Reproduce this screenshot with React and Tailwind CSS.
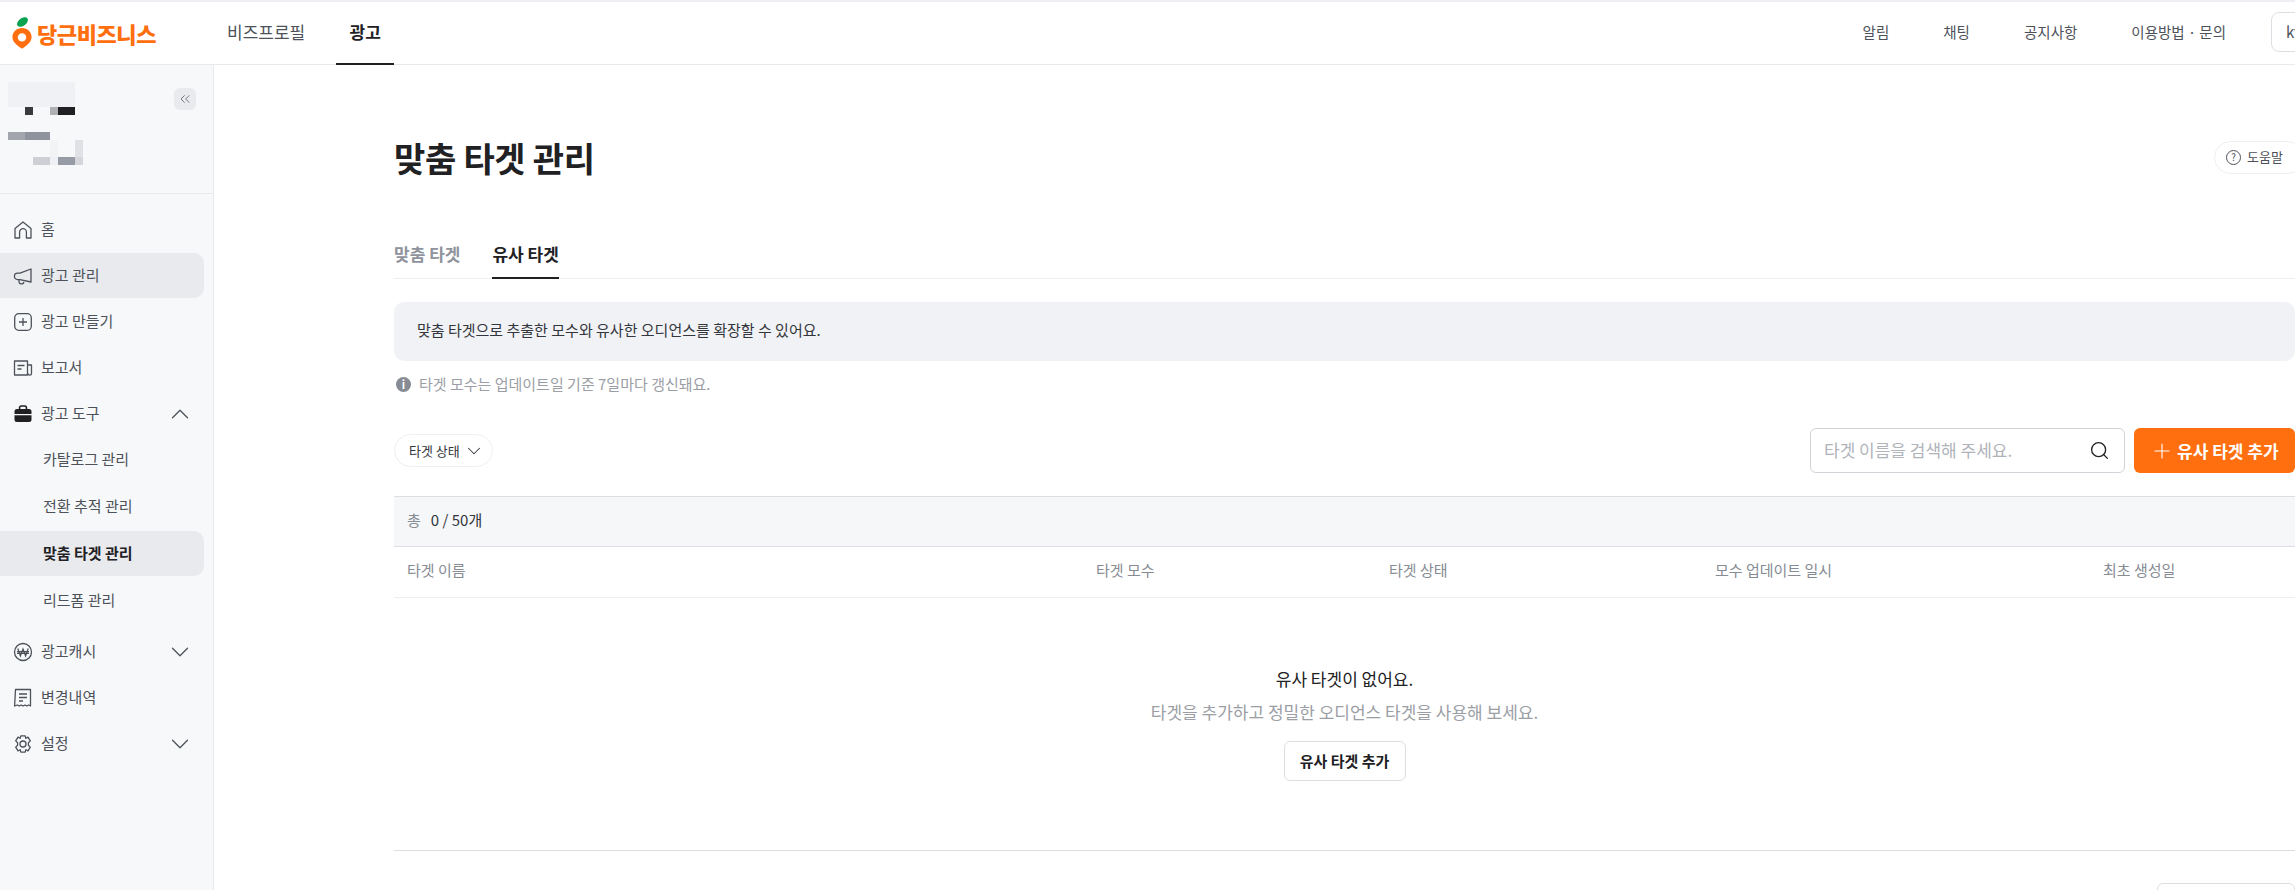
import { ChevronDown, ChevronUp, ChevronsLeft, Plus, Search } from 'lucide-react'

const font = { fontFamily: '"Noto Sans CJK KR", "Noto Sans", sans-serif' }

function Logo() {
  return (
    <svg width="20" height="32" viewBox="0 0 20 32">
      <ellipse cx="10.5" cy="5" rx="6.2" ry="3.8" transform="rotate(-38 10.5 5)" fill="#0aa34f" />
      <path d="M10 11c5.6 0 9.6 4 9.6 9 0 5-4.6 8.2-8 10.8-1 .8-2.2.8-3.2 0C5 28.2.4 25 .4 20c0-5 4-9 9.6-9z" fill="#ff6f0f" />
      <circle cx="10" cy="20.4" r="4.2" fill="#fff" />
    </svg>
  )
}

function HomeIcon() {
  return (
    <svg width="20" height="20" viewBox="0 0 20 20" fill="none" stroke="#4d5159" strokeWidth="1.3" strokeLinejoin="round">
      <path d="M2 8.4 10 2l8 6.4V18h-4.6v-6a3.4 3.4 0 0 0-6.8 0v6H2z" />
    </svg>
  )
}

function MegaphoneIcon() {
  return (
    <svg width="20" height="20" viewBox="0 0 20 20" fill="none" stroke="#4d5159" strokeWidth="1.3" strokeLinejoin="round">
      <path d="M18 3v13L7 13.6H4.6a3.2 3.2 0 0 1 0-6.4H7z" />
      <path d="M6 13.6v1.6a2.4 2.4 0 0 0 4.8.6" />
    </svg>
  )
}

function PlusBoxIcon() {
  return (
    <svg width="20" height="20" viewBox="0 0 20 20" fill="none" stroke="#4d5159" strokeWidth="1.3">
      <rect x="1.700" y="1.700" width="16.600" height="16.600" rx="4" />
      <path d="M10 6v8M6 10h8" />
    </svg>
  )
}

function ReportIcon() {
  return (
    <svg width="20" height="20" viewBox="0 0 20 20" fill="none" stroke="#4d5159" strokeWidth="1.3" strokeLinejoin="round">
      <path d="M1.500 3h13v14h-13z" />
      <path d="M14.500 7h4v8.400a1.700 1.700 0 0 1-3.400 0" />
      <path d="M4.500 7.500h7M4.500 11h4" />
    </svg>
  )
}

function BriefcaseIcon() {
  return (
    <svg width="20" height="20" viewBox="0 0 20 20">
      <path d="M6.600 5V3.600c0-.9.7-1.600 1.600-1.600h3.600c.9 0 1.600.7 1.600 1.600V5" fill="none" stroke="#212124" strokeWidth="1.600" />
      <path d="M4 5h12a2.500 2.500 0 0 1 2.500 2.500V10h-17V7.500A2.500 2.500 0 0 1 4 5z" fill="#212124" />
      <path d="M1.500 11.200h17V15.500A2.500 2.500 0 0 1 16 18H4a2.500 2.500 0 0 1-2.500-2.500z" fill="#212124" />
    </svg>
  )
}

function WonIcon() {
  return (
    <svg width="20" height="20" viewBox="0 0 20 20" fill="none" stroke="#4d5159" strokeWidth="1.300">
      <circle cx="10" cy="10" r="8.500" />
      <path d="m4.800 6.500 2.600 7.500L10 7l2.600 7 2.600-7.500M4 9.600h12M4 11.400h12" strokeWidth="1.200" />
    </svg>
  )
}

function ReceiptIcon() {
  return (
    <svg width="20" height="20" viewBox="0 0 20 20" fill="none" stroke="#4d5159" strokeWidth="1.300" strokeLinejoin="round">
      <path d="M2.500 1.500h15v16.500l-2-1-1.700 1-1.900-1-1.900 1-1.900-1-1.900 1-1.700-1-2.900 1z" />
      <path d="M6 6h8M6 9.500h8M6 13h4" />
    </svg>
  )
}

function GearIcon() {
  return (
    <svg width="20" height="20" viewBox="0 0 20 20" fill="none" stroke="#4d5159" strokeWidth="1.300" strokeLinejoin="round">
      <path d="M7.800 1.800h4.400l.6 2.500 2.200-1.200 2.300 3.800-1.900 1.800v2.600l1.900 1.800-2.300 3.800-2.200-1.200-.6 2.500H7.800l-.6-2.500L5 16.900l-2.300-3.800 1.900-1.800V8.700L2.700 6.900 5 3.100l2.200 1.200z" />
      <circle cx="10" cy="10" r="3" />
    </svg>
  )
}

function Mosaic() {
  return (
    <svg width="83" height="83" viewBox="8 82 83 83" shapeRendering="crispEdges">
      <rect x="8" y="82" width="67" height="25" fill="#f0f1f4" />
      <rect x="25" y="107" width="8" height="8" fill="#3a3a3c" />
      <rect x="50" y="107" width="8" height="8" fill="#b0b0b2" />
      <rect x="58" y="107" width="17" height="8" fill="#202022" />
      <rect x="8" y="132" width="17" height="8" fill="#a2a5ae" />
      <rect x="25" y="132" width="25" height="8" fill="#8f939d" />
      <rect x="50" y="140" width="8" height="17" fill="#f2f3f5" />
      <rect x="75" y="140" width="8" height="17" fill="#e0e1e5" />
      <rect x="33" y="157" width="17" height="8" fill="#cdcfd5" />
      <rect x="50" y="157" width="8" height="8" fill="#eff0f3" />
      <rect x="58" y="157" width="17" height="8" fill="#979ba5" />
      <rect x="75" y="157" width="8" height="8" fill="#d5d6db" />
    </svg>
  )
}

function NavItem({ icon, label, active, chevron }) {
  return (
    <div className={`h-[45px] mr-[9px] flex items-center pl-[13px] pr-[9px] rounded-r-[10px] text-[15px] text-[#4d5159] ${active ? 'bg-[#e9eaee]' : ''}`}>
      <span className="w-[20px] h-[20px] mr-[8px]">{icon}</span>
      <span className="flex-1">{label}</span>
      {chevron === 'up' && <ChevronUp size={30} strokeWidth={1} color="#4d5159" />}
      {chevron === 'down' && <ChevronDown size={30} strokeWidth={1} color="#4d5159" />}
    </div>
  )
}

function SubItem({ label, active }) {
  return (
    <div className={`h-[45px] mr-[9px] flex items-center pl-[43px] rounded-r-[10px] text-[15px] ${active ? 'bg-[#e9eaee] font-bold text-[#212124]' : 'text-[#4d5159]'}`}>
      {label}
    </div>
  )
}

function Sidebar() {
  return (
    <aside className="w-[214px] shrink-0 bg-[#f7f8fa] border-r border-[#e9eaee]">
      <div className="h-[129px] border-b border-[#e9eaee] pl-[8px] pt-[17px] flex items-start">
        <Mosaic />
        <div className="ml-[83px] mt-[6px] w-[22px] h-[22px] rounded-[6px] bg-[#e9eaee] flex items-center justify-center">
          <ChevronsLeft size={16} strokeWidth={1.1} color="#4d5159" />
        </div>
      </div>
      <nav className="pt-[13px] flex flex-col">
        <div className="flex flex-col gap-px">
          <NavItem icon={<HomeIcon />} label="홈" />
          <NavItem icon={<MegaphoneIcon />} label="광고 관리" active />
          <NavItem icon={<PlusBoxIcon />} label="광고 만들기" />
          <NavItem icon={<ReportIcon />} label="보고서" />
          <NavItem icon={<BriefcaseIcon />} label="광고 도구" chevron="up" />
        </div>
        <div className="flex flex-col gap-[2px] mt-px mb-[6px]">
          <SubItem label="카탈로그 관리" />
          <SubItem label="전환 추적 관리" />
          <SubItem label="맞춤 타겟 관리" active />
          <SubItem label="리드폼 관리" />
        </div>
        <div className="flex flex-col gap-px">
          <NavItem icon={<WonIcon />} label="광고캐시" chevron="down" />
          <NavItem icon={<ReceiptIcon />} label="변경내역" />
          <NavItem icon={<GearIcon />} label="설정" chevron="down" />
        </div>
      </nav>
    </aside>
  )
}

function Header() {
  return (
    <header className="h-[65px] shrink-0 border-t-2 border-b border-t-[#eeeff2] border-b-[#e9eaee] flex items-stretch bg-white">
      <div className="flex items-center gap-[5px] pl-[12px] w-[227px]">
        <Logo />
        <span className="text-[22px] font-black text-[#ff6f0f] tracking-[-0.4px]">당근비즈니스</span>
      </div>
      <div className="flex items-center text-[17px] text-[#4d5159] pb-[2px] mr-[31px]">비즈프로필</div>
      <div className="w-[58px] flex items-center justify-center pb-[2px] text-[17px] font-bold text-[#212124] border-b-[2px] border-[#212124] -mb-px">광고</div>
      <div className="flex-1 flex items-center justify-end text-[14.500px] text-[#4d5159] gap-[54px] -mr-[116px] pb-[2px]">
        <span>알림</span>
        <span>채팅</span>
        <span>공지사항</span>
        <span>이용방법 · 문의</span>
        <div className="w-[140px] h-[40px] border border-[#dcdee3] rounded-[8px] flex items-center pl-[14px] -ml-[9px] text-[15px]">kt</div>
      </div>
    </header>
  )
}

function EmptyState() {
  return (
    <div className="h-[253px] border-b border-[#dcdee3] flex flex-col items-center pt-[69px]">
      <p className="text-[17px] leading-[24px] text-[#212124]">유사 타겟이 없어요.</p>
      <p className="text-[17px] leading-[24px] mt-[9px] text-[#9b9ea5]">타겟을 추가하고 정밀한 오디언스 타겟을 사용해 보세요.</p>
      <button className="mt-[17px] w-[122px] h-[40px] border border-[#dcdee3] rounded-[6px] text-[15px] font-bold text-[#212124]">유사 타겟 추가</button>
    </div>
  )
}

function Content() {
  const columns = [
    { label: '타겟 이름', width: 'w-[689px]' },
    { label: '타겟 모수', width: 'w-[293px]' },
    { label: '타겟 상태', width: 'w-[326px]' },
    { label: '모수 업데이트 일시', width: 'w-[388px]' },
    { label: '최초 생성일', width: 'flex-1' },
  ]
  return (
    <main className="flex-1 min-w-0 pl-[180px] pt-[70px]">
      <div className="h-[46px] flex items-center justify-between">
        <h1 className="text-[34px] font-bold text-[#212124] tracking-[-0.3px] pb-[2px]">맞춤 타겟 관리</h1>
        <div className="w-[90px] h-[33px] -mr-[9px] mt-[-2px] border border-[#eeeff2] rounded-full flex items-center pl-[11px] gap-[6px] text-[13px] text-[#4d5159]">
          <span className="w-[15px] h-[15px] rounded-full border border-[#4d5159] flex items-center justify-center text-[10px] leading-none">?</span>
          <span>도움말</span>
        </div>
      </div>

      <div className="mt-[54px] h-[44px] border-b border-[#eeeff2] flex items-stretch gap-[32px] text-[17px] font-bold">
        <div className="pt-[6px] text-[#8f939c]">맞춤 타겟</div>
        <div className="pt-[6px] text-[#212124] border-b-[2px] border-[#212124] -mb-px">유사 타겟</div>
      </div>

      <div className="mt-[23px] h-[59px] rounded-[10px] bg-[#f1f2f6] flex items-center pl-[23px] pb-[2px] text-[15px] text-[#33363c]">
        맞춤 타겟으로 추출한 모수와 유사한 오디언스를 확장할 수 있어요.
      </div>

      <div className="mt-[11px] h-[24px] flex items-center gap-[8px] pl-[2px] text-[15px] text-[#9b9ea5]">
        <span className="w-[15px] h-[15px] rounded-full bg-[#868b94] text-white text-[11px] font-bold flex items-center justify-center leading-none">i</span>
        타겟 모수는 업데이트일 기준 7일마다 갱신돼요.
      </div>

      <div className="mt-[32px] h-[45px] flex items-center justify-between">
        <div className="w-[99px] h-[33px] border border-[#eeeff2] rounded-full flex items-center pl-[14px] gap-[3px] text-[13px] text-[#33363c]">
          타겟 상태
          <ChevronDown size={22} strokeWidth={1.1} />
        </div>
        <div className="flex gap-[9px]">
          <div className="w-[315px] h-[45px] border border-[#d1d3d8] rounded-[6px] flex items-center justify-between pl-[13px] pr-[14px] text-[17px] text-[#b0b3ba]">
            <span className="pb-[1px]">타겟 이름을 검색해 주세요.</span>
            <Search size={21} strokeWidth={1.5} color="#212124" />
          </div>
          <button className="w-[161px] h-[45px] rounded-[6px] bg-[#ff6f0f] flex items-center pl-[16px] gap-[3px] text-[17px] font-bold text-white">
            <Plus size={24} strokeWidth={1.1} />
            유사 타겟 추가
          </button>
        </div>
      </div>

      <div className="mt-[23px] h-[51px] border-y border-[#dcdee3] bg-[#f6f7f9] flex items-center pl-[13px] pb-[3px] gap-[10px] text-[15px]">
        <span className="text-[#868b94]">총</span>
        <span className="text-[#33363c]">0 / 50개</span>
      </div>

      <div className="h-[51px] border-b border-[#eeeff2] flex items-center pl-[13px] pb-[3px] text-[15px] text-[#868b94]">
        {columns.map(c => <div key={c.label} className={c.width}>{c.label}</div>)}
      </div>

      <EmptyState />

      <div className="mt-[32px] h-[40px] flex justify-end">
        <div className="w-[138px] h-[40px] border border-[#dcdee3] rounded-[6px]" />
      </div>
    </main>
  )
}

export default function App() {
  return (
    <div className="w-[2295px] h-[890px] overflow-hidden flex flex-col bg-white" style={font}>
      <Header />
      <div className="flex-1 flex min-h-0">
        <Sidebar />
        <Content />
      </div>
    </div>
  )
}
